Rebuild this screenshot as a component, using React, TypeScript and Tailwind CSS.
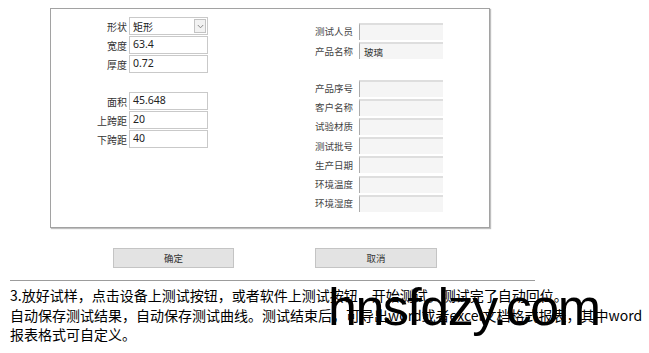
import React from "react";

const cjk = "font-['Noto_Sans_CJK_SC','Noto_Sans',sans-serif]";

function LeftRow({ label, children }: { label: string; children: React.ReactNode }) {
  return (
    <div className="flex items-center h-[18px]">
      <div className="w-[78px] pr-[2px] text-right text-[10px] text-[#333]">{label}</div>
      {children}
    </div>
  );
}

function LeftInput({ value }: { value: string }) {
  return (
    <div className="w-[79px] h-[18px] border border-[#c9c9c9] bg-white flex items-center pl-[3px] text-[10.5px] text-[#222] font-['Noto_Sans','Noto_Sans_CJK_SC',sans-serif]">
      {value}
    </div>
  );
}

function RightRow({ label, value }: { label: string; value?: string }) {
  return (
    <div className="flex items-center h-[17px]">
      <div className="w-[44px] text-[9.5px] text-[#444]">{label}</div>
      <div className="w-[84px] h-[17px] bg-[#f5f5f5] border-t-2 border-t-[#dedede] border-l border-l-[#ababab] flex items-center pl-[4px] text-[9.5px] text-[#333]">
        {value}
      </div>
    </div>
  );
}

export default function App() {
  return (
    <div className={`relative w-[649px] h-[353px] bg-white overflow-hidden ${cjk}`}>
      <div className="ml-[50px] pt-[8px]">
        <div className="w-[440px] h-[220px] border border-[#a2a2a2] shadow-[1px_1px_1px_rgba(0,0,0,0.25)] flex bg-white">
          <div className="w-[200px] pt-[8px] flex flex-col gap-[1px]">
            <LeftRow label="形状">
              <div className="w-[79px] h-[18px] border border-[#c9c9c9] bg-white flex items-center justify-between pl-[3px] pr-[1px] text-[10px] text-[#222]">
                <span>矩形</span>
                <span className="w-[12px] h-[14px] border border-[#c3c3c3] bg-[#f2f2f2] flex items-center justify-center">
                  <svg width="7" height="5" viewBox="0 0 7 5">
                    <path d="M0.8 1 L3.5 3.8 L6.2 1" fill="none" stroke="#8a8a8a" strokeWidth="1" />
                  </svg>
                </span>
              </div>
            </LeftRow>
            <LeftRow label="宽度">
              <LeftInput value="63.4" />
            </LeftRow>
            <LeftRow label="厚度">
              <LeftInput value="0.72" />
            </LeftRow>
            <div className="h-[17px]" />
            <LeftRow label="面积">
              <LeftInput value="45.648" />
            </LeftRow>
            <LeftRow label="上跨距">
              <LeftInput value="20" />
            </LeftRow>
            <LeftRow label="下跨距">
              <LeftInput value="40" />
            </LeftRow>
          </div>
          <div className="pl-[64px] pt-[14px] flex flex-col gap-[2.2px]">
            <RightRow label="测试人员" />
            <RightRow label="产品名称" value="玻璃" />
            <div className="h-[16px]" />
            <RightRow label="产品序号" />
            <RightRow label="客户名称" />
            <RightRow label="试验材质" />
            <RightRow label="测试批号" />
            <RightRow label="生产日期" />
            <RightRow label="环境温度" />
            <RightRow label="环境湿度" />
          </div>
        </div>
      </div>

      <div className="mt-[20px] ml-[113px] flex gap-[81px]">
        <button className="w-[121px] h-[20px] bg-[#e3e3e3] border border-[#c4c4c4] text-[9.5px] text-[#333] flex items-center justify-center">
          确定
        </button>
        <button className="w-[122px] h-[20px] bg-[#e3e3e3] border border-[#c4c4c4] text-[9.5px] text-[#333] flex items-center justify-center">
          取消
        </button>
      </div>

      <div className="mt-[12px] ml-[10px] w-[525px] h-px bg-[#9c9c9c]" />

      <div className="ml-[10px] mt-[5px] text-[14px] leading-[19.5px] text-black whitespace-nowrap">
        <div>3.放好试样，点击设备上测试按钮，或者软件上测试按钮，开始测试。测试完了自动回位。</div>
        <div>
          自动保存测试结果，自动保存测试曲线。测试结束后，可导出word或者excel文档格式报表，其中word
        </div>
        <div>报表格式可自定义。</div>
      </div>

      <div className="absolute left-[328px] top-[281px] text-[52px] leading-none tracking-[-1.5px] text-black font-['Liberation_Sans',Arial,sans-serif]">
        hnsfdzy.com
      </div>
    </div>
  );
}
